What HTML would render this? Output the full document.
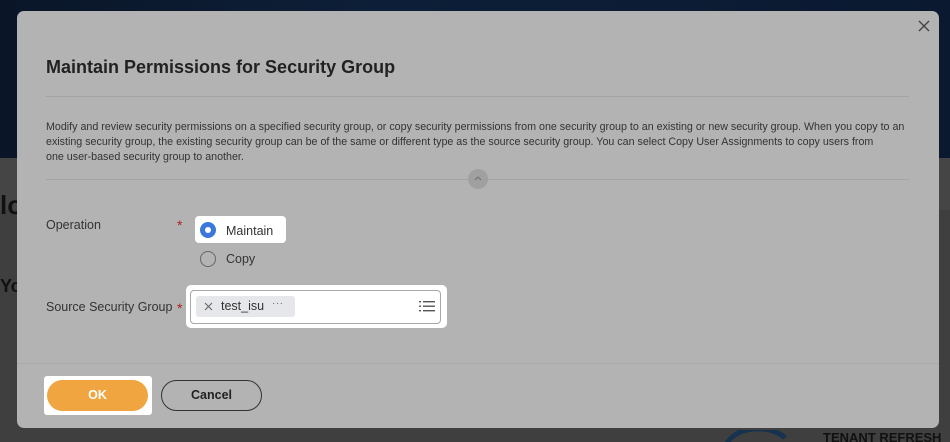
<!DOCTYPE html>
<html style="width:950px;height:442px;overflow:hidden;background:#3f3f3f"><head><meta charset="utf-8"><style>
*{margin:0;padding:0;box-sizing:border-box}
body{width:950px;height:442px;overflow:hidden;position:relative;background:#3f3f3f;font-family:"Liberation Sans",Arial,sans-serif;color:#333}
.wrap{position:absolute;left:0;top:0;width:950px;height:442px;overflow:hidden;background:#3f3f3f}
.top{position:absolute;left:0;top:0;width:950px;height:158px;background:linear-gradient(90deg,#0a1628,#0d1f38 40%,#0a1930)}
.strip{position:absolute;left:0;top:158px;width:950px;height:52px;background:#454545}
.m{position:absolute;left:17px;top:11px;width:922px;height:417px;background:#b3b3b3;border-radius:7px}
.a{position:absolute}
.line{position:absolute;height:1px;background:#a3a3a3}
</style></head><body><div class="wrap">
<div class="top"></div>
<div class="strip"></div>
<div class="a" style="left:0;top:190px;font-size:26px;font-weight:bold;color:#111">lo</div>
<div class="a" style="left:0;top:276px;font-size:18px;font-weight:bold;color:#111">Yo</div>
<div class="a" style="left:823px;top:430px;height:12px;overflow:hidden;font-size:13px;line-height:16px;font-weight:bold;color:#111">TENANT REFRESH</div>
<svg class="a" style="left:724px;top:430px" width="70" height="12" viewBox="0 0 70 12"><path d="M3 14A32 20 0 0 1 61 8" stroke="#17324f" stroke-width="5" fill="none"/></svg>
<div class="m">
  <svg class="a" style="left:901px;top:9px" width="12" height="12" viewBox="0 0 12 12"><path d="M1 1L11 11M11 1L1 11" stroke="#444" stroke-width="1.4"/></svg>
  <div class="a" style="left:29px;top:46px;font-size:18px;font-weight:bold;color:#222">Maintain Permissions for Security Group</div>
  <div class="line" style="left:29px;top:85px;width:863px"></div>
  <div class="a" style="left:29px;top:109px;width:864px;font-size:10.7px;line-height:15px;color:#333">Modify and review security permissions on a specified security group, or copy security permissions from one security group to an existing or new security group. When you copy to an existing security group, the existing security group can be of the same or different type as the source security group. You can select Copy User Assignments to copy users from<br>one user-based security group to another.</div>
  <div class="line" style="left:29px;top:168px;width:863px"></div>
  <div class="a" style="left:451px;top:158px;width:20px;height:20px;border-radius:50%;background:#a0a0a0"></div>
  <svg class="a" style="left:456px;top:164px" width="10" height="6" viewBox="0 0 10 6"><path d="M2 5L5 2L8 5" stroke="#777" stroke-width="1.3" fill="none"/></svg>
  <div class="a" style="left:29px;top:207px;font-size:12.5px;color:#333">Operation</div>
  <div class="a" style="left:160px;top:206px;font-size:14px;color:#b02020">*</div>
  <div class="a" style="left:178px;top:205px;width:91px;height:27px;background:#fff;border-radius:4px"></div>
  <div class="a" style="left:183px;top:211px;width:16px;height:16px;border-radius:50%;background:#3a78dc"></div>
  <div class="a" style="left:188px;top:216px;width:6px;height:6px;border-radius:50%;background:#fff"></div>
  <div class="a" style="left:209px;top:213px;font-size:12.5px;color:#333">Maintain</div>
  <div class="a" style="left:183px;top:240px;width:16px;height:16px;border-radius:50%;border:1.3px solid #666"></div>
  <div class="a" style="left:209px;top:241px;font-size:12.5px;color:#333">Copy</div>
  <div class="a" style="left:29px;top:289px;font-size:12.5px;color:#333">Source Security Group</div>
  <div class="a" style="left:160px;top:289px;font-size:14px;color:#b02020">*</div>
  <div class="a" style="left:169px;top:274px;width:261px;height:43px;background:#fff;border-radius:5px"></div>
  <div class="a" style="left:173px;top:279px;width:251px;height:34px;border:1px solid #a8a8a8;border-radius:4px"></div>
  <div class="a" style="left:179px;top:285px;width:99px;height:21px;background:#e6e7ea;border-radius:3px"></div>
  <svg class="a" style="left:187px;top:291px" width="9" height="9" viewBox="0 0 9 9"><path d="M1 1L8 8M8 1L1 8" stroke="#666" stroke-width="1.1"/></svg>
  <div class="a" style="left:204px;top:288px;font-size:12.5px;color:#333">test_isu</div>
  <div class="a" style="left:255px;top:287px;font-size:10px;color:#666;letter-spacing:0.5px">···</div>
  <svg class="a" style="left:402px;top:289px" width="16" height="13" viewBox="0 0 16 13"><g fill="#555"><rect x="0" y="1" width="2" height="1.4"/><rect x="4" y="1" width="12" height="1.4"/><rect x="0" y="5.5" width="2" height="1.4"/><rect x="4" y="5.5" width="12" height="1.4"/><rect x="0" y="10" width="2" height="1.4"/><rect x="4" y="10" width="12" height="1.4"/></g></svg>
  <div class="line" style="left:0;top:352px;width:922px;background:#a8a8a8"></div>
  <div class="a" style="left:27px;top:365px;width:108px;height:39px;background:#fff;border-radius:3px"></div>
  <div class="a" style="left:30px;top:369px;width:101px;height:31px;background:#f0a540;border-radius:16px;color:#fff;font-size:12.5px;font-weight:bold;text-align:center;line-height:31px">OK</div>
  <div class="a" style="left:144px;top:369px;width:101px;height:31px;border:1.5px solid #333;border-radius:16px;color:#222;font-size:12.5px;font-weight:bold;text-align:center;line-height:28px">Cancel</div>
</div>
</div></body></html>
